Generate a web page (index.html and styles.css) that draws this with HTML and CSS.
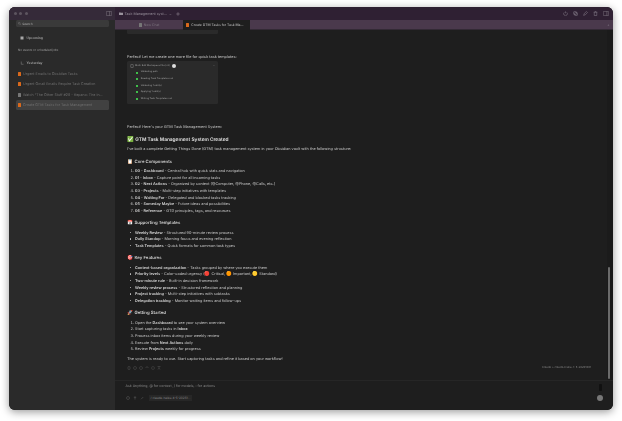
FILE: index.html
```html
<!DOCTYPE html>
<html lang="en">
<head>
<meta charset="utf-8">
<title>Task Management</title>
<link rel="stylesheet" href="styles.css">
</head>
<body>
<div class="window">
  <header class="titlebar">
    <div class="title-left">
      <div class="lights"><i></i><i></i><i></i></div>
      <svg class="ico side-toggle" viewBox="0 0 10 8"><rect x=".5" y=".5" width="9" height="7" rx="1.2"/><path d="M6 .5v7"/></svg>
    </div>
    <div class="title-mid">
      <svg class="ico-fill" viewBox="0 0 8 6"><path d="M0 .6h3l.8.8H8V6H0z"/></svg>
      <span>Task Management syst...</span><span class="chev">⌄</span>
      <svg class="ico gear" viewBox="0 0 8 8"><circle cx="4" cy="4" r="2.4"/><circle cx="4" cy="4" r=".8"/></svg>
    </div>
    <div class="title-right">
      <svg class="ico" viewBox="0 0 8 8"><path d="M2 2.2a3 3 0 1 0 4 0M4 .6v3"/></svg>
      <svg class="ico" viewBox="0 0 8 8"><rect x="1" y="1" width="4.5" height="4.5" rx=".7"/><rect x="2.6" y="2.6" width="4.5" height="4.5" rx=".7"/></svg>
      <svg class="ico" viewBox="0 0 8 8"><path d="M1 7l1-3 3.5-3.2 1.6 1.6L3.800 6z"/></svg>
      <svg class="ico" viewBox="0 0 8 8"><path d="M1 2h6M2 2v5.200h4V2M3 2V1h2v1"/></svg>
      <svg class="ico" viewBox="0 0 10 8"><rect x=".5" y=".5" width="9" height="7" rx="1.200"/><path d="M6.500 .5v7"/></svg>
    </div>
  </header>
  <div class="body">
    <aside class="sidebar">
      <div class="search"><svg class="ico" viewBox="0 0 8 8"><circle cx="3.400" cy="3.400" r="2.400"/><path d="M5.200 5.200L7.400 7.400"/></svg><span>Search</span></div>
      <div class="side-head first"><svg class="ico-fill" viewBox="0 0 8 8"><path d="M1 1h6v6H1z"/></svg><span>Upcoming</span></div>
      <div class="side-note">No events or scheduled jobs</div>
      <div class="side-head"><svg class="ico" viewBox="0 0 8 8"><path d="M2.500 1v5.500H7"/></svg><span>Yesterday</span></div>
      <ul class="chats">
        <li><b class="dot"></b><span>Urgent Emails to Obsidian Tasks</span></li>
        <li><b class="dot"></b><span>Urgent Gmail Emails Require Task Creation</span></li>
        <li><b class="dot grey"></b><span>Watch "The Other Stuff #28 - Kepano: The In...</span></li>
        <li class="active"><b class="dot"></b><span>Create GTM Tasks for Task Management</span></li>
      </ul>
    </aside>
    <section class="main">
      <nav class="tabs">
        <div class="tab"><b class="dot grey"></b><span>New Chat</span></div>
        <div class="tab current"><b class="dot"></b><span>Create GTM Tasks for Task Ma...</span></div>
        <div class="tab-fill"><span>+</span></div>
      </nav>
      <div class="scrollarea">
        <article class="chat">
          <div class="clip-card"></div>
          <p class="lead">Perfect! Let me create one more file for quick task templates:</p>
          <div class="tool">
            <div class="tool-head"><svg class="ico" viewBox="0 0 8 8"><rect x="1.500" y="1" width="5" height="6" rx=".6"/></svg><span>Multi-Edit Workspace File (x3)</span><i class="check"></i><em>⌄</em></div>
            <div class="tool-row"><b></b>Validating path</div>
            <div class="tool-row"><b></b>Reading Task Templates.md</div>
            <div class="tool-row"><b></b>Validating 1 edit(s)</div>
            <div class="tool-row"><b></b>Applying 1 edit(s)</div>
            <div class="tool-row"><b></b>Writing Task Templates.md</div>
          </div>
          <p class="perfect">Perfect! Here's your GTM Task Management System:</p>
          <h1><i class="emoji">✅</i>GTM Task Management System Created</h1>
          <p class="intro">I've built a complete Getting Things Done (GTM) task management system in your Obsidian vault with the following structure:</p>
          <h2><i class="emoji">📋</i>Core Components</h2>
          <ol>
            <li><strong>00 - Dashboard</strong> - Central hub with quick stats and navigation</li>
            <li><strong>01 - Inbox</strong> - Capture point for all incoming tasks</li>
            <li><strong>02 - Next Actions</strong> - Organized by context (@Computer, @Phone, @Calls, etc.)</li>
            <li><strong>03 - Projects</strong> - Multi-step initiatives with templates</li>
            <li><strong>04 - Waiting For</strong> - Delegated and blocked tasks tracking</li>
            <li><strong>05 - Someday Maybe</strong> - Future ideas and possibilities</li>
            <li><strong>06 - Reference</strong> - GTD principles, tags, and resources</li>
          </ol>
          <h2><i class="emoji">📅</i>Supporting Templates</h2>
          <ul>
            <li><strong>Weekly Review</strong> - Structured 90-minute review process</li>
            <li><strong>Daily Standup</strong> - Morning focus and evening reflection</li>
            <li><strong>Task Templates</strong> - Quick formats for common task types</li>
          </ul>
          <h2><i class="emoji">🎯</i>Key Features</h2>
          <ul>
            <li><strong>Context-based organization</strong> - Tasks grouped by where you execute them</li>
            <li><strong>Priority levels</strong> - Color-coded urgency (<i class="emoji inline">🔴</i> Critical, <i class="emoji inline">🟠</i> Important, <i class="emoji inline">🟡</i> Standard)</li>
            <li><strong>Two-minute rule</strong> - Built-in decision framework</li>
            <li><strong>Weekly review process</strong> - Structured reflection and planning</li>
            <li><strong>Project tracking</strong> - Multi-step initiatives with subtasks</li>
            <li><strong>Delegation tracking</strong> - Monitor waiting items and follow-ups</li>
          </ul>
          <h2><i class="emoji">🚀</i>Getting Started</h2>
          <ol>
            <li>Open the <strong>Dashboard</strong> to see your system overview</li>
            <li>Start capturing tasks in <strong>Inbox</strong></li>
            <li>Process inbox items during your weekly review</li>
            <li>Execute from <strong>Next Actions</strong> daily</li>
            <li>Review <strong>Projects</strong> weekly for progress</li>
          </ol>
          <p class="closing">The system is ready to use. Start capturing tasks and refine it based on your workflow!</p>
          <div class="msg-foot">
            <div class="actions">
              <svg class="ico" viewBox="0 0 8 8"><rect x="2" y="1" width="4" height="6" rx=".6"/></svg>
              <svg class="ico" viewBox="0 0 8 8"><circle cx="4" cy="4" r="3"/></svg>
              <svg class="ico" viewBox="0 0 8 8"><circle cx="4" cy="4" r="3"/></svg>
              <svg class="ico" viewBox="0 0 8 8"><path d="M1.500 4a2.500 2.500 0 1 1 5 0"/></svg>
              <svg class="ico" viewBox="0 0 8 8"><rect x="1.500" y="1.500" width="5" height="5" rx="1"/></svg>
              <svg class="ico" viewBox="0 0 8 8"><path d="M1 1h6M4 1v3M4 4L2 7M4 4l2 3"/></svg>
            </div>
            <span class="model-note">Claude + claude-haiku-4-5-20251001</span>
          </div>
        </article>
        <div class="scroll-track"><div class="scroll-thumb"></div></div>
      </div>
      <footer class="composer">
        <div class="prompt-row">
          <div class="prompt">Ask Anything, @ for context, / for models, : for actions</div>
          <span class="mic"></span>
        </div>
        <div class="composer-row">
          <svg class="ico" viewBox="0 0 8 8"><circle cx="4" cy="4" r="3"/></svg>
          <svg class="ico" viewBox="0 0 8 8"><path d="M4 1v6M1.500 2.500h5"/></svg>
          <svg class="ico" viewBox="0 0 8 8"><path d="M2 6.500L6.500 2"/></svg>
          <span class="model-pill">/ claude-haiku-4-5-20251...</span>
          <span class="send"></span>
        </div>
      </footer>
    </section>
  </div>
</div>
</body>
</html>
```
FILE: styles.css
```css
* { box-sizing: border-box; }
html, body { margin: 0; height: 100%; }
body {
  background: #fff;
  font-family: Inter, "Liberation Sans", sans-serif;
  font-size: 3.8px;
  color: #c8c8c8;
  overflow: hidden;
  padding: 7px 9px 11px;
  text-rendering: geometricPrecision;
}
.window {
  width: 604px;
  height: 403px;
  border-radius: 6px;
  overflow: hidden;
  display: flex;
  flex-direction: column;
  background: #1e1e1e;
  box-shadow: 0 2px 8px rgba(0,0,0,.4);
  filter: blur(.22px);
}
.ico { width: 4px; height: 4px; fill: none; stroke: currentColor; stroke-width: .8; flex: none; }
.ico-fill { width: 4px; height: 3.2px; fill: currentColor; flex: none; }
.titlebar { height: 13px; flex: none; display: flex; align-items: center; background: #2f2033; color: #8d8490; }
.title-left { width: 106px; height: 100%; display: flex; align-items: center; justify-content: space-between; padding: 0 3px 0 5px; background: #352a39; }
.lights { display: flex; gap: 2.400px; }
.lights i { width: 3px; height: 3px; border-radius: 50%; background: #5d5560; }
.side-toggle { width: 6px; height: 5px; }
.title-mid { display: flex; align-items: center; gap: 1.500px; padding-left: 4px; font-size: 3.600px; flex: 1; color: #9a929d; }
.title-mid .chev { font-size: 3px; margin-left: 1px; }
.gear { margin-left: 3px; }
.title-right { display: flex; align-items: center; gap: 5px; padding-right: 4.500px; }
.title-right .ico { width: 5px; height: 5px; }
.title-right .ico:last-child { width: 6px; }
.body { flex: 1; min-height: 0; display: flex; }
.sidebar { width: 106px; flex: none; background: #2a2a2a; padding: 0 6px 0 7px; display: flex; flex-direction: column; color: #a4a4a4; }
.search { height: 7px; background: #3a3a3a; border-radius: 1.500px; display: flex; align-items: center; gap: 1.200px; padding: 0 2px; font-size: 3.200px; color: #a8a8a8; }
.search .ico { width: 3px; height: 3px; }
.side-head { display: flex; align-items: center; gap: 2.500px; padding-left: 4px; margin-top: 9px; font-size: 3.300px; font-weight: 600; color: #a8a8a8; }
.side-head .ico, .side-head .ico-fill { width: 4px; height: 4px; }
.side-note { font-size: 3px; margin: 8px 0 0 2px; color: #a0a0a0; }
.chats { list-style: none; margin: 4px 0 0; padding: 0; }
.chats li { height: 10.300px; display: flex; align-items: center; gap: 1.800px; padding-left: 2px; font-size: 3.600px; color: #6f6f6f; border-radius: 1.500px; white-space: nowrap; }
.chats li.active { background: #414141; }
.dot { width: 3.200px; height: 4px; border-radius: .6px; background: #d9691c; flex: none; display: block; }
.dot.grey { background: #777; }
.main { flex: 1; min-width: 0; display: flex; flex-direction: column; background: #1e1e1e; }
.tabs { height: 10px; flex: none; display: flex; background: #4a394c; border-bottom: 1px solid #332a35; font-size: 3.400px; }
.tab { width: 68px; display: flex; align-items: center; justify-content: center; gap: 2px; color: #7d747f; }
.tab.current { width: 67px; background: #1e1e1e; color: #c4c4c4; justify-content: flex-start; padding-left: 3px; margin-bottom: -1px; }
.tab-fill { flex: 1; display: flex; align-items: center; justify-content: flex-end; padding-right: 3.500px; color: #8d8490; }
.scrollarea { flex: 1; min-height: 0; display: flex; overflow: hidden; }
.chat { flex: 1; min-width: 0; padding: 0 0 0 12px; line-height: 6.670px; }
.clip-card { width: 91px; height: 4px; background: #2a2a2a; border-radius: 0 0 1.500px 1.500px; }
.lead { margin: 19.500px 0 0; }
.tool { width: 91px; height: 42.500px; margin-top: 1px; background: #2a2a2a; border-radius: 1.500px; padding: 1.700px 3px 0; font-size: 2.450px; color: #a0a0a0; }
.tool-head { display: flex; align-items: center; gap: 1px; height: 6.500px; }
.tool-head .check { width: 4px; height: 4px; margin-left: 1px; border-radius: 50%; background: #ddd; }
.tool-head em { margin-left: auto; font-style: normal; }
.tool-row { display: flex; align-items: center; gap: 2.700px; height: 6.600px; padding-left: 6px; }
.tool-row b { width: 2px; height: 2px; background: #3fbf4a; flex: none; }
.perfect { margin: 20.500px 0 0; }
h1 { margin: 6px 0 0; font-size: 4.800px; line-height: 7px; font-weight: 600; color: #e2e2e2; display: flex; align-items: center; }
h2 { margin: 5.500px 0 0; font-size: 4.300px; line-height: 7px; font-weight: 600; color: #d4d4d4; display: flex; align-items: center; }
.emoji { font-style: normal; font-family: "Noto Color Emoji", "DejaVu Sans", sans-serif; }
h1 .emoji { font-size: 5.500px; margin-right: 1.500px; }
h2 .emoji { font-size: 4.800px; margin-right: 1.500px; }
.emoji.inline { font-size: 4.600px; line-height: 0; }
.intro { margin: 2.500px 0 0; }
.chat ol, .chat ul { margin: 2.500px 0 0; padding: 0 0 0 8px; }
.chat ul { list-style: none; }
.chat ul li::before { content: ""; display: inline-block; width: 1.300px; height: 1.300px; border-radius: 50%; background: #c4c4c4; margin: 0 3.700px .7px -5px; }
.chat li strong { font-weight: 600; color: #dcdcdc; }
.closing { margin: 3px 0 0; }
.msg-foot { display: flex; align-items: center; justify-content: space-between; margin-top: 1.500px; padding-right: 16px; color: #606060; }
.actions { display: flex; gap: 2px; }
.model-note { font-size: 2.750px; color: #8a8a8a; }
.scroll-track { width: 6px; flex: none; padding: 237px 1px 0 .5px; background: #1b1b1b; }
.scroll-thumb { width: 2.500px; height: 112px; background: #6b6b6b; border-radius: 1px; }
.composer { height: 30px; flex: none; padding: 0 10px 0 10.500px; color: #6f6f6f; border-top: 1px solid #262626; }
.prompt-row { display: flex; align-items: flex-start; justify-content: space-between; margin-top: 2px; height: 10px; }
.prompt { font-size: 3.500px; line-height: 7px; color: #8a8a8a; }
.mic { width: 3px; height: 6.500px; margin: 1px 1.500px 0 0; background: #111; border-radius: .8px; }
.composer-row { display: flex; align-items: center; gap: 3px; margin-top: 2px; }
.model-pill { background: #272727; padding: 1px 2px; font-size: 3.050px; color: #888; margin-left: 2px; }
.send { margin-left: auto; width: 6px; height: 6px; border-radius: 50%; background: #777; }
```
